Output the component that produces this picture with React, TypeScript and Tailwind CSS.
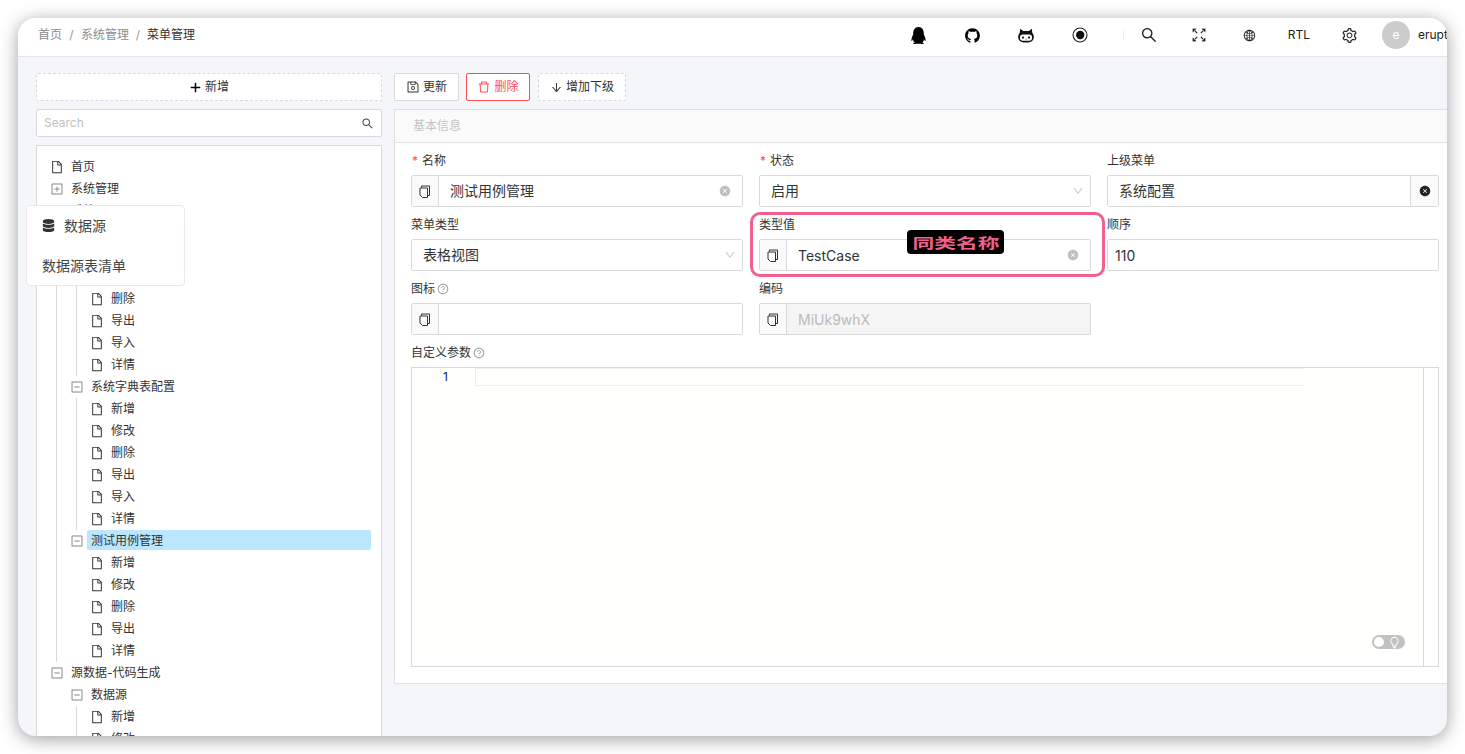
import React from 'react';
import {
  AiOutlineSearch,
  AiOutlineGlobal,
  AiOutlineSetting,
  AiOutlineFile,
  AiOutlinePlus,
  AiOutlineSave,
  AiOutlineDelete,
  AiOutlineArrowDown,
  AiOutlineQuestionCircle,
  AiFillCloseCircle,
  AiOutlinePlusSquare,
  AiOutlineMinusSquare,
  AiOutlineDown,
  AiOutlineBulb,
  AiOutlineGithub,
} from 'react-icons/ai';
import { FaQq, FaDatabase } from 'react-icons/fa';

type Row = { depth: 0 | 1 | 2; label: string; kind: 'file' | 'plus' | 'minus'; guides?: number[]; active?: boolean };

const leaves = (names: string[], guides: number[]): Row[] =>
  names.map((label) => ({ depth: 2, label, kind: 'file', guides }));

const treeRows: Row[] = [
  { depth: 0, label: '首页', kind: 'file' },
  { depth: 0, label: '系统管理', kind: 'plus' },
  { depth: 0, label: '系统工具', kind: 'minus' },
  { depth: 1, label: '系统配置', kind: 'minus', guides: [19] },
  ...leaves(['新增', '修改', '删除', '导出', '导入', '详情'], [19, 39]),
  { depth: 1, label: '系统字典表配置', kind: 'minus', guides: [19] },
  ...leaves(['新增', '修改', '删除', '导出', '导入', '详情'], [19, 39]),
  { depth: 1, label: '测试用例管理', kind: 'minus', guides: [19], active: true },
  ...leaves(['新增', '修改', '删除', '导出', '详情'], [19]),
  { depth: 0, label: '源数据-代码生成', kind: 'minus' },
  { depth: 1, label: '数据源', kind: 'minus' },
  ...leaves(['新增', '修改'], [39]),
];

const indent = ['pl-[10px]', 'pl-[30px]', 'pl-[50px]'];

const CopyIcon = () => (
  <svg width="12" height="13" viewBox="0 0 12 13" fill="none" stroke="#333" strokeWidth="1">
    <path d="M2.5 2.5V1h8v9.5H9" />
    <path d="M1 3h7.5v9.5H3.5L1 10z" />
  </svg>
);

const FullscreenIcon = () => (
  <svg width="14" height="14" viewBox="0 0 14 14" fill="#222" stroke="#222">
    <path d="M3 3 5.2 5.2M11 3 8.8 5.2M3 11l2.2-2.2M11 11 8.8 8.8" strokeWidth="1.1" />
    <path d="M.8.8h3.4L.8 4.2zM13.2.8H9.8l3.4 3.4zM.8 13.2h3.4L.8 9.8zM13.2 13.2H9.8l3.4-3.4z" strokeWidth="0.3" />
  </svg>
);

const RecordIcon = () => (
  <svg width="16" height="16" viewBox="0 0 16 16">
    <circle cx="8" cy="8" r="7" fill="none" stroke="#222" strokeWidth="1.1" />
    <circle cx="8.2" cy="8" r="4.2" fill="#111" />
  </svg>
);

const CatIcon = () => (
  <svg width="16" height="15" viewBox="0 0 16 15">
    <path d="M2.2.8 5.2 3h5.6l3-2.2.5 4.2c1 1 1.5 2.3 1.5 4 0 3.6-2.4 5.6-7.8 5.6S.2 12.600.2 9c0-1.700.5-3 1.500-4z" fill="#111" />
    <rect x="2" y="6.600" width="12" height="6.200" rx="2.800" fill="#fff" />
    <circle cx="5" cy="9.600" r="1.100" fill="#111" />
    <circle cx="11" cy="9.600" r="1.100" fill="#111" />
    <circle cx="8" cy="11" r="0.500" fill="#111" />
  </svg>
);

const Label = ({ text, required, help }: { text: string; required?: boolean; help?: boolean }) => (
  <div className="flex items-center h-[16px] mb-[6px] text-[12px] text-[#333]">
    {required && <span className="text-[#ff4d4f] mr-[4px] ml-px">*</span>}
    <span>{text}</span>
    {help && <AiOutlineQuestionCircle className="ml-[2px] text-[12px] text-[#999]" />}
  </div>
);

const CopyAddon = () => (
  <div className="w-[27px] shrink-0 h-full flex items-center justify-center bg-[#fafafa] border-r border-[#d9d9d9]">
    <CopyIcon />
  </div>
);

const ClearIcon = () => <AiFillCloseCircle className="text-[12px] text-[#bfbfbf] shrink-0" />;

const Field = ({ className = '', children }: { className?: string; children: React.ReactNode }) => (
  <div className={`h-[32px] flex items-center border border-[#d9d9d9] rounded-[2px] text-[14px] text-[#333] overflow-hidden ${className}`}>
    {children}
  </div>
);

const App: React.FC = () => {
  return (
    <div className="w-screen h-screen bg-white p-[18px] overflow-hidden font-['Inter','Noto_Sans_CJK_SC',sans-serif]">
      <div className="relative w-[1429px] h-[718px] rounded-[18px] overflow-hidden bg-[#f5f6fa] flex flex-col shadow-[0_3px_18px_rgba(0,0,0,0.38)]">
        {/* Header */}
        <div className="h-[39px] shrink-0 pb-[4px] flex items-center bg-white border-b border-[#e3e4e8] text-[#222] overflow-hidden">
          <div className="w-[873px] shrink-0 pl-[20px] flex items-center text-[12px] text-[#8c8c8c]">
            <span>首页</span>
            <span className="w-[19px] text-center text-[#999]">/</span>
            <span>系统管理</span>
            <span className="w-[18px] text-center text-[#999]">/</span>
            <span className="text-[#333]">菜单管理</span>
          </div>
          <div className="w-[54px] shrink-0 flex justify-center"><FaQq className="text-[17px] text-black" /></div>
          <div className="w-[54px] shrink-0 flex justify-center"><AiOutlineGithub className="text-[17px] text-black" /></div>
          <div className="w-[54px] shrink-0 flex justify-center"><CatIcon /></div>
          <div className="w-[54px] shrink-0 flex justify-center"><RecordIcon /></div>
          <div className="w-[17px] shrink-0 h-[12px] border-r border-[#eeeeee]" />
          <div className="w-[50px] shrink-0 flex justify-center"><AiOutlineSearch className="text-[18px]" /></div>
          <div className="w-[50px] shrink-0 flex justify-center"><FullscreenIcon /></div>
          <div className="w-[50px] shrink-0 flex justify-center"><AiOutlineGlobal className="text-[13px]" /></div>
          <div className="w-[50px] shrink-0 text-center text-[12px]">RTL</div>
          <div className="w-[50px] shrink-0 flex justify-center"><AiOutlineSetting className="text-[17px]" /></div>
          <div className="w-[28px] h-[28px] ml-[8px] shrink-0 rounded-full bg-[#cccccc] text-white text-[12px] flex items-center justify-center">e</div>
          <div className="ml-[8px] shrink-0 text-[12px]">erupt</div>
        </div>

        {/* Body */}
        <div className="flex-1 min-h-0 flex pt-[16px] pl-[18px] gap-[12px]">
          {/* Left tree */}
          <div className="w-[346px] shrink-0 flex flex-col min-h-0">
            <button className="h-[28px] shrink-0 flex items-center justify-center gap-[3px] bg-white border border-dashed border-[#d9d9d9] rounded-[2px] text-[12px] text-[#333]">
              <AiOutlinePlus className="text-[13px] text-black stroke-[40]" />
              新增
            </button>
            <div className="h-[28px] shrink-0 mt-[8px] flex items-center justify-between px-[7px] bg-white border border-[#d9d9d9] rounded-[2px]">
              <span className="text-[12px] text-[#bfbfbf]">Search</span>
              <AiOutlineSearch className="text-[13px] text-[#444]" />
            </div>
            <div className="flex-1 min-h-0 mt-[8px] pt-[10px] pr-[10px] bg-white border border-b-0 border-[#d9d9d9] overflow-hidden">
              {treeRows.map((row, i) => (
                <div key={i} className={`relative h-[22px] flex items-center ${indent[row.depth]}`}>
                  {row.guides?.map((g) => (
                    <span key={g} className={`absolute top-0 bottom-0 w-px bg-[#d9d9d9] ${g === 19 ? 'left-[19px]' : 'left-[39px]'}`} />
                  ))}
                  <span className="w-[20px] shrink-0 flex justify-center">
                    {row.kind === 'file' && <AiOutlineFile className="text-[14px] text-[#333]" />}
                    {row.kind === 'plus' && <AiOutlinePlusSquare className="text-[14px] text-[#888]" />}
                    {row.kind === 'minus' && <AiOutlineMinusSquare className="text-[14px] text-[#888]" />}
                  </span>
                  <span className={`flex-1 self-start h-[20px] leading-[22px] px-[4px] rounded-[2px] text-[12px] text-[#333] ${row.active ? 'bg-[#bae7ff]' : ''}`}>
                    {row.label}
                  </span>
                </div>
              ))}
            </div>
          </div>

          {/* Right form */}
          <div className="flex-1 min-w-0">
            <div className="flex items-center gap-[7px] h-[28px] text-[12px] text-[#333]">
              <button className="h-[28px] w-[65px] flex items-center justify-center gap-[3px] bg-white border border-[#d9d9d9] rounded-[2px]">
                <AiOutlineSave className="text-[14px]" />
                更新
              </button>
              <button className="h-[28px] w-[64px] flex items-center justify-center gap-[3px] bg-white border border-[#ff4d4f] rounded-[2px] text-[#ff4d4f]">
                <AiOutlineDelete className="text-[14px]" />
                删除
              </button>
              <button className="h-[28px] w-[88px] ml-px flex items-center justify-center gap-[3px] bg-white border border-dashed border-[#d9d9d9] rounded-[2px]">
                <AiOutlineArrowDown className="text-[13px]" />
                增加下级
              </button>
            </div>
            <div className="mt-[8px] bg-white border border-r-0 border-[#e0e0e0]">
              <div className="h-[33px] flex items-center pl-[18px] bg-[#fafafa] border-b border-[#e0e0e0] text-[12px] text-[#c4c4c4]">
                基本信息
              </div>
              <div className="pt-[10px] pl-[16px] pr-[8px] pb-[16px]">
                <div className="grid grid-cols-3 gap-x-[16px] gap-y-[10px]">
                  <div>
                    <Label text="名称" required />
                    <Field>
                      <CopyAddon />
                      <span className="flex-1 pl-[11px] pb-[2px]">测试用例管理</span>
                      <span className="mr-[11px] flex"><ClearIcon /></span>
                    </Field>
                  </div>
                  <div>
                    <Label text="状态" required />
                    <Field className="pl-[11px] pr-[6px] justify-between">
                      <span className="pb-[2px]">启用</span>
                      <AiOutlineDown className="text-[12px] text-[#c4c4c4]" />
                    </Field>
                  </div>
                  <div>
                    <Label text="上级菜单" />
                    <Field>
                      <span className="flex-1 pl-[11px] pb-[2px]">系统配置</span>
                      <span className="w-[28px] h-full flex items-center justify-center bg-[#fafafa] border-l border-[#d9d9d9]">
                        <AiFillCloseCircle className="text-[12px] text-[#222]" />
                      </span>
                    </Field>
                  </div>
                  <div>
                    <Label text="菜单类型" />
                    <Field className="pl-[11px] pr-[6px] justify-between">
                      <span className="pb-[2px]">表格视图</span>
                      <AiOutlineDown className="text-[12px] text-[#c4c4c4]" />
                    </Field>
                  </div>
                  <div>
                    <Label text="类型值" />
                    <Field>
                      <CopyAddon />
                      <span className="flex-1 pl-[11px]">TestCase</span>
                      <span className="mr-[11px] flex"><ClearIcon /></span>
                    </Field>
                  </div>
                  <div>
                    <Label text="顺序" />
                    <Field className="pl-[7px]">
                      <span>110</span>
                    </Field>
                  </div>
                  <div>
                    <Label text="图标" help />
                    <Field>
                      <CopyAddon />
                    </Field>
                  </div>
                  <div>
                    <Label text="编码" />
                    <Field className="bg-[#f5f5f5]">
                      <CopyAddon />
                      <span className="flex-1 pl-[11px] text-[#bbbbbb]">MiUk9whX</span>
                    </Field>
                  </div>
                  <div />
                  <div className="col-span-3">
                    <Label text="自定义参数" help />
                    <div className="relative h-[300px] flex bg-[#fffffe] border border-[#d9d9d9]">
                      <div className="w-[63px] shrink-0 pr-[27px] text-right text-[12px] leading-[18px] text-[#0b216f]">1</div>
                      <div className="w-[829px] shrink-0 h-[18px] border-y border-l border-[#eeeeee]" />
                      <div className="flex-1" />
                      <div className="w-[15px] shrink-0 border-l border-[#d9d9d9] bg-white" />
                      <div className="absolute right-[33px] bottom-[17px] w-[33px] h-[14px] rounded-full bg-[#c2c2c2] flex items-center justify-between pl-[2px] pr-[4px]">
                        <span className="w-[10px] h-[10px] rounded-full bg-white" />
                        <AiOutlineBulb className="text-[13px] text-white" />
                      </div>
                    </div>
                  </div>
                </div>
              </div>
            </div>
          </div>
        </div>

        {/* Floating menu over the tree */}
        <div className="absolute left-[8px] top-[187px] w-[159px] h-[81px] bg-white border border-[#f1e5e9] rounded-[4px] text-[14px] text-[#444]">
          <div className="h-[39px] flex items-center pl-[15px] gap-[9px]">
            <FaDatabase className="text-[13px] text-[#333]" />
            数据源
          </div>
          <div className="h-[40px] flex items-center pl-[15px]">数据源表清单</div>
        </div>

        {/* Annotation */}
        <div className="absolute left-[732px] top-[194px] w-[355px] h-[65px] border-[3px] border-[#f1608f] rounded-[10px]" />
        <div className="absolute left-[889px] top-[212px] w-[97px] h-[24px] bg-black rounded-[4px] flex items-center justify-center">
          <span className="block scale-x-[1.55] text-[14px] font-bold text-[#f1608f] font-['Noto_Sans_CJK_SC',sans-serif]">同类名称</span>
        </div>
      </div>
    </div>
  );
};

export default App;
